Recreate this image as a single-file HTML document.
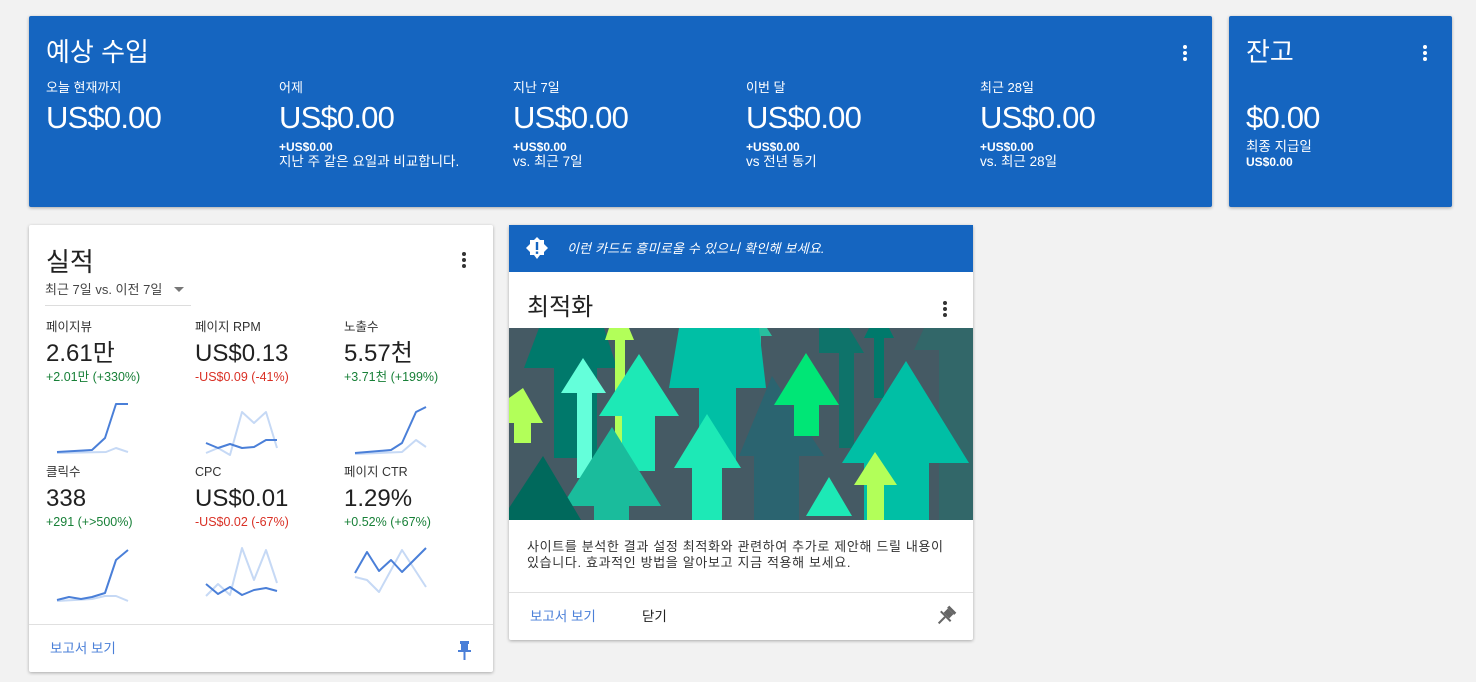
<!DOCTYPE html>
<html><head><meta charset="utf-8"><style>
*{margin:0;padding:0;box-sizing:border-box}
body{width:1476px;height:682px;background:#f2f2f2;position:relative;overflow:hidden;font-family:"Liberation Sans","Noto Sans CJK KR",sans-serif}
.c{position:absolute;border-radius:2px;box-shadow:0 1px 3px rgba(0,0,0,.3)}
.b{background:#1565c0;color:#fff}
.w{background:#fff}
.t{position:absolute;white-space:nowrap;line-height:1}
.big{font-size:31px;letter-spacing:-0.8px}
.dots{position:absolute;width:4px}
.dots i{display:block;width:4px;height:4px;border-radius:2px;margin-bottom:2px}
.g{color:#188038}.r{color:#d93025}
.k{font-size:13.5px}
</style></head><body>
<div class="c b" style="left:29px;top:16px;width:1183px;height:191px"></div>
<div class="c b" style="left:1229px;top:16px;width:223px;height:191px"></div>
<div class="c w" style="left:29px;top:225px;width:464px;height:447px"></div>
<div class="c w" style="left:509px;top:225px;width:464px;height:415px"></div>

<div style="color:#fff">
<div class="t" style="left:46px;top:39px;font-size:26px">예상 수입</div>
<div class="dots" style="left:1183px;top:45px"><i style="background:#fff"></i><i style="background:#fff"></i><i style="background:#fff"></i></div>
<div class="t k" style="left:46px;top:81px;font-size:13px">오늘 현재까지</div>
<div class="t big" style="left:46px;top:102px">US$0.00</div>
<div class="t" style="left:279px;top:81px;font-size:13px">어제</div>
<div class="t big" style="left:279px;top:102px">US$0.00</div>
<div class="t" style="left:279px;top:141px;font-size:12px;font-weight:bold">+US$0.00</div>
<div class="t k" style="left:279px;top:155px">지난 주 같은 요일과 비교합니다.</div>
<div class="t" style="left:513px;top:81px;font-size:13px">지난 7일</div>
<div class="t big" style="left:513px;top:102px">US$0.00</div>
<div class="t" style="left:513px;top:141px;font-size:12px;font-weight:bold">+US$0.00</div>
<div class="t k" style="left:513px;top:155px">vs. 최근 7일</div>
<div class="t" style="left:746px;top:81px;font-size:13px">이번 달</div>
<div class="t big" style="left:746px;top:102px">US$0.00</div>
<div class="t" style="left:746px;top:141px;font-size:12px;font-weight:bold">+US$0.00</div>
<div class="t k" style="left:746px;top:155px">vs 전년 동기</div>
<div class="t" style="left:980px;top:81px;font-size:13px">최근 28일</div>
<div class="t big" style="left:980px;top:102px">US$0.00</div>
<div class="t" style="left:980px;top:141px;font-size:12px;font-weight:bold">+US$0.00</div>
<div class="t k" style="left:980px;top:155px">vs. 최근 28일</div>

<div class="t" style="left:1246px;top:39px;font-size:26px">잔고</div>
<div class="dots" style="left:1423px;top:45px"><i style="background:#fff"></i><i style="background:#fff"></i><i style="background:#fff"></i></div>
<div class="t big" style="left:1246px;top:102px">$0.00</div>
<div class="t k" style="left:1246px;top:140px">최종 지급일</div>
<div class="t" style="left:1246px;top:156px;font-size:12px;font-weight:bold">US$0.00</div>
</div>

<div style="color:#212121">
<div class="t" style="left:46px;top:249px;font-size:26px">실적</div>
<div class="dots" style="left:462px;top:252px"><i style="background:#333"></i><i style="background:#333"></i><i style="background:#333"></i></div>
<div class="t" style="left:45px;top:283px;font-size:13px;color:#444">최근 7일 vs. 이전 7일</div>
<div style="position:absolute;left:174px;top:287px;border:5px solid transparent;border-top:5px solid #777"></div>
<div style="position:absolute;left:45px;top:305px;width:146px;height:1px;background:#ddd"></div>

<div class="t" style="left:46px;top:321px;font-size:12.5px;color:#333">페이지뷰</div>
<div class="t" style="left:46px;top:342px;font-size:24px">2.61만</div>
<div class="t g" style="left:46px;top:371px;font-size:12.5px">+2.01만 (+330%)</div>
<div class="t" style="left:195px;top:321px;font-size:12.5px;color:#333">페이지 RPM</div>
<div class="t" style="left:195px;top:342px;font-size:24px">US$0.13</div>
<div class="t r" style="left:195px;top:371px;font-size:12.5px">-US$0.09 (-41%)</div>
<div class="t" style="left:344px;top:321px;font-size:12.5px;color:#333">노출수</div>
<div class="t" style="left:344px;top:342px;font-size:24px">5.57천</div>
<div class="t g" style="left:344px;top:371px;font-size:12.5px">+3.71천 (+199%)</div>

<div class="t" style="left:46px;top:466px;font-size:12.5px;color:#333">클릭수</div>
<div class="t" style="left:46px;top:487px;font-size:24px">338</div>
<div class="t g" style="left:46px;top:516px;font-size:12.5px">+291 (+&gt;500%)</div>
<div class="t" style="left:195px;top:466px;font-size:12.5px;color:#333">CPC</div>
<div class="t" style="left:195px;top:487px;font-size:24px">US$0.01</div>
<div class="t r" style="left:195px;top:516px;font-size:12.5px">-US$0.02 (-67%)</div>
<div class="t" style="left:344px;top:466px;font-size:12.5px;color:#333">페이지 CTR</div>
<div class="t" style="left:344px;top:487px;font-size:24px">1.29%</div>
<div class="t g" style="left:344px;top:516px;font-size:12.5px">+0.52% (+67%)</div>

<div style="position:absolute;left:29px;top:624px;width:464px;height:1px;background:#e0e0e0"></div>
<div class="t" style="left:50px;top:642px;font-size:13.5px;color:#4a7fd8">보고서 보기</div>

<div style="position:absolute;left:509px;top:225px;width:464px;height:47px;background:#1565c0"></div>
<svg style="position:absolute;left:526px;top:237px" width="22" height="22" viewBox="0 0 22 22"><polygon points="11,0 14,3 18,3 18,7 22,11 18,15 18,18 14,18 11,22 8,18 4,18 4,15 0,11 4,7 4,3 8,3" fill="#fff"/><rect x="9.8" y="5" width="2.4" height="8" fill="#1565c0"/><rect x="9.8" y="14.5" width="2.4" height="2.4" fill="#1565c0"/></svg>
<div class="t" style="left:567px;top:242px;font-size:13px;color:#fff;font-style:italic;letter-spacing:0.2px">이런 카드도 흥미로울 수 있으니 확인해 보세요.</div>
<div class="t" style="left:527px;top:296px;font-size:24px">최적화</div>
<div class="dots" style="left:943px;top:301px"><i style="background:#333"></i><i style="background:#333"></i><i style="background:#333"></i></div>

<svg style="position:absolute;left:509px;top:328px" width="464" height="192" viewBox="0 0 464 192">
<rect width="464" height="192" fill="#455a64"/>
<g>
<polygon points="30,0 95,0 108,40 88,40 88,130 45,130 45,40 15,40" fill="#00796b"/>
<polygon points="310,0 340,0 355,25 345,25 345,120 330,120 330,25 310,25" fill="#00796b" opacity=".8"/>
<polygon points="360,0 380,0 385,10 375,10 375,70 365,70 365,10 355,10" fill="#00796b"/>
<polygon points="415,0 464,0 464,192 430,192 430,22 405,22" fill="#2d6a6a" opacity=".8"/>
<polygon points="100,0 120,0 125,12 116,12 116,125 106,125 106,12 96,12" fill="#b2ff59"/>
<polygon points="238,0 258,0 263,8 252,8 252,20 243,20 243,8 233,8" fill="#1de9b6" opacity=".7"/>
<polygon points="74,30 97,65 83,65 83,150 68,150 68,65 52,65" fill="#64ffda"/>
<polygon points="14,60 34,95 22,95 22,115 5,115 5,95 0,95 0,70" fill="#b2ff59"/>
<polygon points="130,26 170,88 146,88 146,143 113,143 113,88 90,88" fill="#1de9b6"/>
<polygon points="170,0 250,0 257,60 227,60 227,140 190,140 190,60 160,60" fill="#00bfa5"/>
<polygon points="263,48 315,128 290,128 290,192 245,192 245,128 230,128" fill="#2b6470"/>
<polygon points="297,25 330,77 310,77 310,108 285,108 285,77 265,77" fill="#00e676"/>
<polygon points="198,86 232,140 213,140 213,192 183,192 183,140 165,140" fill="#1de9b6"/>
<polygon points="103,99 152,178 120,178 120,192 85,192 85,178 53,178" fill="#1abc9c"/>
<polygon points="34,128 72,192 0,192 0,180" fill="#00695c"/>
<polygon points="397,33 460,135 420,135 420,192 355,192 355,135 333,135" fill="#00bfa5"/>
<polygon points="366,124 388,157 375,157 375,192 358,192 358,157 345,157" fill="#b2ff59"/>
<polygon points="320,149 343,188 297,188" fill="#1de9b6"/>
</g>
</svg>
<div class="t" style="left:527px;top:540px;font-size:13px;letter-spacing:0.65px;color:#333">사이트를 분석한 결과 설정 최적화와 관련하여 추가로 제안해 드릴 내용이</div>
<div class="t" style="left:527px;top:556px;font-size:13px;letter-spacing:0.65px;color:#333">있습니다. 효과적인 방법을 알아보고 지금 적용해 보세요.</div>
<div style="position:absolute;left:509px;top:592px;width:464px;height:1px;background:#e0e0e0"></div>
<div class="t" style="left:530px;top:610px;font-size:13.5px;color:#4a7fd8">보고서 보기</div>
<div class="t" style="left:642px;top:610px;font-size:13.5px;color:#222">닫기</div>
</div>

<svg style="position:absolute;left:0;top:0" width="1476" height="682">
<g fill="none" stroke-width="2" stroke-linejoin="round">
<polyline stroke="#c6d9f5" points="57,453 106,452 116,448 128,452"/>
<polyline stroke="#4a7fd8" points="57,452 92,450 105,438 116,404 128,404"/>
<polyline stroke="#c6d9f5" points="206,453 218,448 230,455 242,412 254,423 266,412 277,448"/>
<polyline stroke="#4a7fd8" points="206,443 218,448 230,444 242,448 254,447 266,440 277,440"/>
<polyline stroke="#c6d9f5" points="355,454 402,452 416,440 426,447"/>
<polyline stroke="#4a7fd8" points="355,453 391,450 402,443 416,412 426,407"/>
<polyline stroke="#c6d9f5" points="57,601 92,599 105,596 116,596 128,601"/>
<polyline stroke="#4a7fd8" points="57,600 69,597 81,599 92,597 105,593 116,560 128,550"/>
<polyline stroke="#c6d9f5" points="206,596 218,584 230,595 242,548 254,580 266,550 277,583"/>
<polyline stroke="#4a7fd8" points="206,584 218,594 230,587 242,595 254,590 266,588 277,591"/>
<polyline stroke="#c6d9f5" points="355,577 367,580 379,592 402,550 426,587"/>
<polyline stroke="#4a7fd8" points="355,573 367,552 379,571 391,560 402,572 426,548"/>
</g>
<g fill="#4a7fd8"><rect x="460" y="641" width="9" height="3"/><rect x="461" y="644" width="7" height="6"/><rect x="458" y="650" width="13" height="2"/><rect x="463.5" y="652" width="2" height="8"/></g>
<g fill="#666" transform="rotate(45 945 617)"><rect x="940" y="606" width="10" height="3"/><rect x="941" y="609" width="8" height="6"/><rect x="938" y="615" width="14" height="2"/><rect x="944" y="617" width="2" height="9"/></g>
</svg>
</body></html>
